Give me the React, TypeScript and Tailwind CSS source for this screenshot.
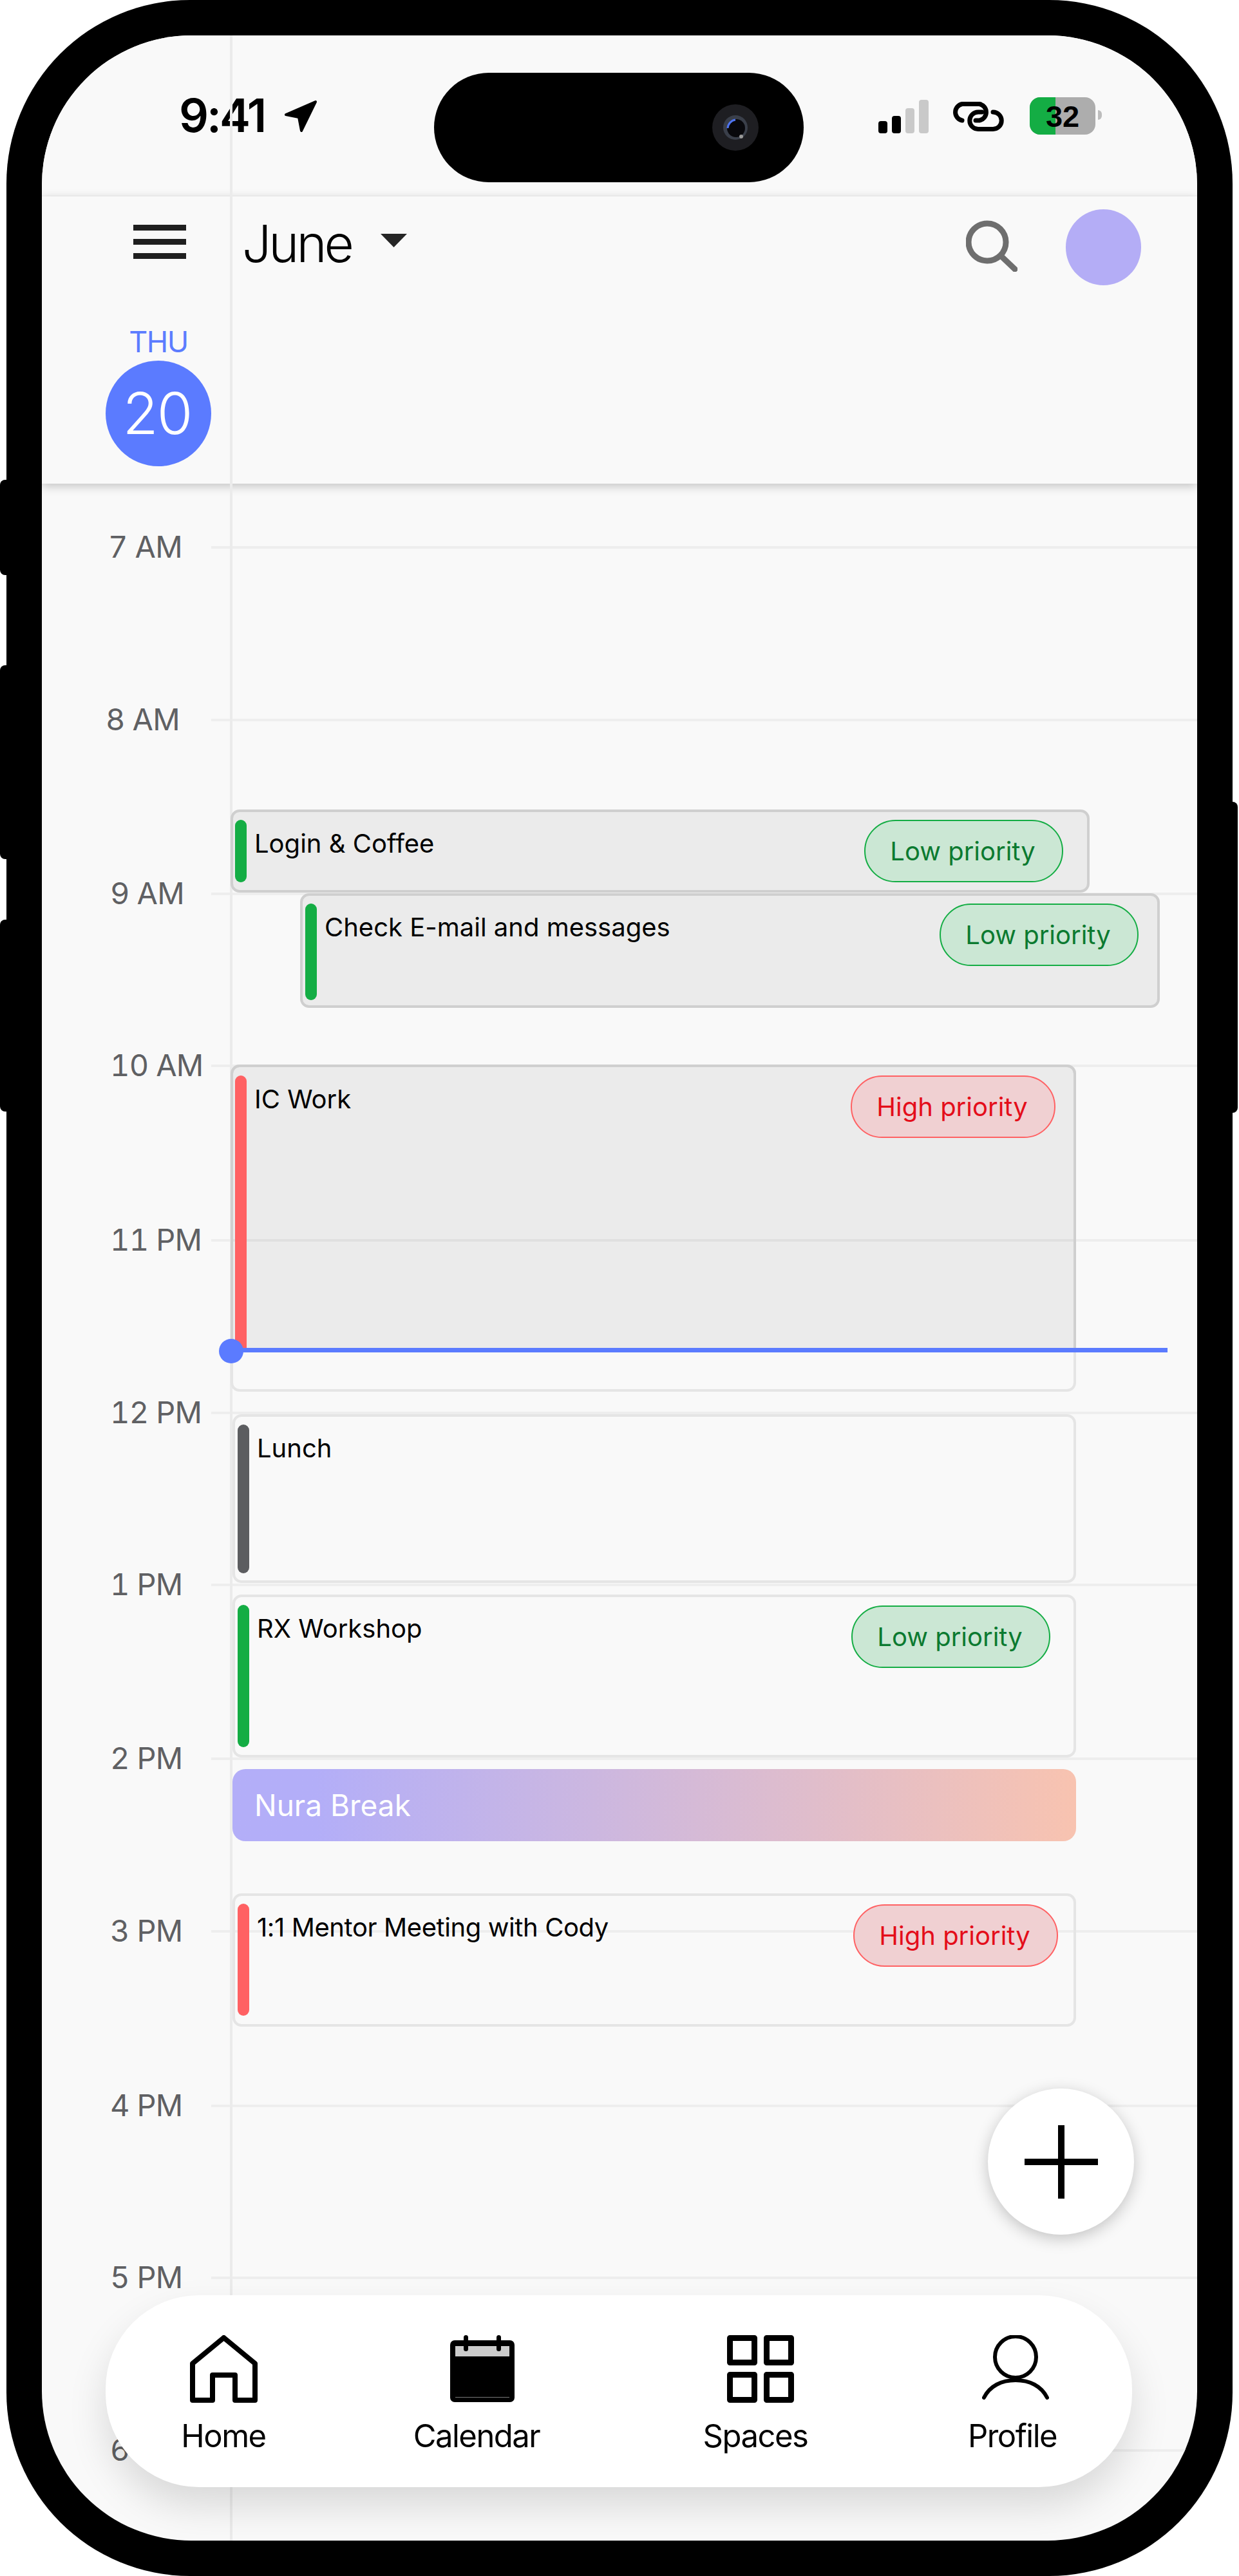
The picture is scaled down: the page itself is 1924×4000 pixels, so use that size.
import type { ReactNode } from "react";

const hours = [
  { label: "7 AM", row: "h-[268px]", text: "ml-[103px]" },
  { label: "8 AM", row: "h-[270px]", text: "ml-[99px]" },
  { label: "9 AM", row: "h-[267px]", text: "ml-[106px]" },
  { label: "10 AM", row: "h-[271px]", text: "ml-[106px]" },
  { label: "11 PM", row: "h-[268px]", text: "ml-[106px]" },
  { label: "12 PM", row: "h-[267px]", text: "ml-[106px]" },
  { label: "1 PM", row: "h-[270px]", text: "ml-[106px]" },
  { label: "2 PM", row: "h-[268px]", text: "ml-[106px]" },
  { label: "3 PM", row: "h-[271px]", text: "ml-[106px]" },
  { label: "4 PM", row: "h-[267px]", text: "ml-[106px]" },
  { label: "5 PM", row: "h-[268px]", text: "ml-[106px]" },
  { label: "6 PM", row: "h-[268px]", text: "ml-[106px]" },
];

function Pill({ kind, className }: { kind: "low" | "high"; className: string }) {
  const tone =
    kind === "low"
      ? "w-[309px] border-[#14ad44] bg-[#cbe7d4] text-[#0b7a30]"
      : "w-[318px] border-[#ff6163] bg-[#f0d0d2] text-[#e40d1a]";
  return (
    <div
      className={`absolute flex h-[97px] items-center justify-center rounded-full border-2 pr-[3px] text-[40px] ${tone} ${className}`}
    >
      {kind === "low" ? "Low priority" : "High priority"}
    </div>
  );
}

function Bar({ color, className }: { color: string; className: string }) {
  return <div className={`w-[18px] shrink-0 rounded-full ${color} ${className}`} />;
}

function Title({ children, className = "" }: { children: ReactNode; className?: string }) {
  return <div className={`mt-[12px] ml-[12px] text-[40px] leading-[50px] text-black ${className}`}>{children}</div>;
}

function NavItem({ icon, label, className, iconClass = "" }: { icon: ReactNode; label: string; className: string; iconClass?: string }) {
  return (
    <div className={`flex w-[200px] flex-col items-center ${className}`}>
      <div className={`flex h-[105px] items-start justify-center ${iconClass}`}>{icon}</div>
      <span className="mt-[27px] text-[49px] leading-[50px] tracking-[-1.5px] text-black">{label}</span>
    </div>
  );
}

function HomeIcon() {
  return (
    <svg width="105" height="105" viewBox="0 0 105 105" fill="none" stroke="#000" strokeWidth="8" strokeLinejoin="round">
      <path d="M35 101H4V44L52.5 4 101 44V101H70V62H35Z" />
    </svg>
  );
}

function CalendarIcon() {
  return (
    <svg width="100" height="105" viewBox="0 0 100 105">
      <rect x="0" y="8" width="100" height="96" rx="7" fill="#000" />
      <rect x="8" y="17" width="84" height="16" fill="#ccc" />
      <rect x="21" y="0" width="7" height="25" rx="3.5" fill="#000" />
      <rect x="72" y="0" width="7" height="25" rx="3.5" fill="#000" />
      <rect x="8" y="96" width="84" height="1" fill="#777" />
    </svg>
  );
}

function SpacesIcon() {
  return (
    <svg width="104" height="105" viewBox="0 0 104 105" fill="none" stroke="#000" strokeWidth="9" strokeLinejoin="round">
      <rect x="4.5" y="4.5" width="38" height="38" />
      <rect x="61.5" y="4.5" width="38" height="38" />
      <rect x="4.5" y="61.5" width="38" height="39" />
      <rect x="61.5" y="61.5" width="38" height="39" />
    </svg>
  );
}

function ProfileIcon() {
  return (
    <svg width="104" height="105" viewBox="0 0 104 105" fill="none" stroke="#000" strokeWidth="6" strokeLinecap="round">
      <circle cx="52" cy="34" r="32" />
      <path d="M3 97C12 79 30 70 52 70S92 79 101 97" />
    </svg>
  );
}

export default function App() {
  return (
    <div className="h-[4000px] w-[1924px] bg-white pl-[10px] font-[Inter,sans-serif]">
      {/* phone body */}
      <div className="relative h-full w-[1904px] rounded-[285px] bg-black p-[55px]">
        <div className="absolute -left-[10px] top-[745px] h-[148px] w-[10px] rounded-l-[8px] bg-black" />
        <div className="absolute -left-[10px] top-[1033px] h-[301px] w-[10px] rounded-l-[8px] bg-black" />
        <div className="absolute -left-[10px] top-[1428px] h-[298px] w-[10px] rounded-l-[8px] bg-black" />
        <div className="absolute -right-[8px] top-[1245px] h-[483px] w-[8px] rounded-r-[8px] bg-black" />

        <div className="relative flex h-full flex-col overflow-hidden rounded-[232px] bg-[#f9f9f9]">
          {/* vertical day line */}
          <div className="absolute bottom-0 left-[292px] top-0 z-[15] w-[4px] bg-[#ebebeb]" />

          {/* status bar */}
          <div className="relative z-10 flex h-[250px] shrink-0 items-start border-b-2 border-[#f6f6f6] bg-[#f9f9f9]">
            <div className="ml-[213px] mt-[88px] text-[72px] font-semibold leading-[72px] tracking-[-3px] text-black">9:41</div>
            <svg className="ml-[30px] mt-[100px]" width="52" height="50" viewBox="0 0 52 50" fill="#000" stroke="#000" strokeWidth="4" strokeLinejoin="round">
              <path d="M3 23L49 3 27 48 23 27Z" />
            </svg>
            <div className="ml-[181px] mt-[58px] flex h-[170px] w-[574px] items-center justify-end rounded-full bg-black pr-[70px]">
              <svg width="72" height="72" viewBox="0 0 72 72">
                <circle cx="36" cy="36" r="36" fill="#1e1e22" />
                <circle cx="36" cy="36" r="19" fill="#3a3f4a" />
                <circle cx="37" cy="37" r="14" fill="#08080c" />
                <path d="M24 37A14 14 0 0 1 36 24" fill="none" stroke="#4f74f0" strokeWidth="3" />
                <circle cx="45" cy="50" r="3" fill="#999" />
              </svg>
            </div>
            <div className="ml-[116px] mt-[100px] flex items-end gap-[7px]">
              <div className="h-[19px] w-[14px] rounded-[4px] bg-black" />
              <div className="h-[27px] w-[14px] rounded-[4px] bg-black" />
              <div className="h-[39px] w-[14px] rounded-[4px] bg-[#c9c9c9]" />
              <div className="h-[52px] w-[15px] rounded-[4px] bg-[#c9c9c9]" />
            </div>
            <svg className="ml-[37px] mt-[103px]" width="80" height="46" viewBox="0 0 80 46" fill="none" stroke="#000" strokeWidth="7" strokeLinecap="round">
              <path d="M15 29A13 13 0 0 1 15 3.5H42A13 13 0 0 1 42 29H36" />
              <path d="M63 16A13 13 0 0 1 63 42.5H40A13 13 0 0 1 40 16H46" />
            </svg>
            <div className="relative ml-[40px] mt-[96px] flex h-[58px] w-[102px] items-center justify-center overflow-hidden rounded-[16px] bg-[#adadad]">
              <div className="absolute inset-y-0 left-0 w-[40px] bg-[#14ad44]" />
              <span className="relative font-['Liberation_Sans',sans-serif] text-[47px] font-bold leading-none text-black">32</span>
            </div>
            <div className="ml-[4px] mt-[116px] h-[15px] w-[6px] rounded-r-full bg-[#bdbdbd]" />
          </div>

          {/* calendar header */}
          <div className="relative z-10 flex h-[446px] shrink-0 flex-col bg-[#f9f9f9] shadow-[0_4px_14px_rgba(0,0,0,0.22)]">
            <div className="flex items-start">
              <div className="ml-[142px] mt-[44px] flex w-[82px] flex-col gap-[13px]">
                <div className="h-[9px] bg-[#1f1f1f]" />
                <div className="h-[9px] bg-[#1f1f1f]" />
                <div className="h-[9px] bg-[#1f1f1f]" />
              </div>
              <div className="ml-[87px] mt-[25px] text-[80px] font-[350] leading-[96px] tracking-[-4px] text-black">June</div>
              <svg className="ml-[45px] mt-[58px]" width="41" height="21" viewBox="0 0 41 21" fill="#262626">
                <path d="M0 0H41L20.5 21Z" />
              </svg>
              <svg className="ml-auto mt-[37px]" width="80" height="80" viewBox="0 0 80 80" fill="none" stroke="#6e6e6e" strokeWidth="9" strokeLinecap="round">
                <circle cx="33" cy="34" r="29" />
                <path d="M55 56L76 76" />
              </svg>
              <div className="ml-[75px] mr-[87px] mt-[20px] h-[118px] w-[117px] rounded-full bg-[#b4adf6]" />
            </div>
            <div className="absolute left-[99px] top-[201px] flex w-[164px] flex-col items-center">
              <span className="text-[45px] leading-[50px] tracking-[-1.5px] text-[#5c7cff]">THU</span>
              <div className="mt-[4px] flex h-[164px] w-[164px] items-center justify-center rounded-full bg-[#5b7bff] pr-[4px] text-[90px] font-light leading-none tracking-[-2px] text-white">
                20
              </div>
            </div>
          </div>

          {/* time grid */}
          <div className="relative flex-1">
            <div className="flex flex-col pt-[69px]">
              {hours.map((h) => (
                <div key={h.label} className={`shrink-0 ${h.row}`}>
                  <div className="flex h-[60px] items-center">
                    <span className={`w-[0px] whitespace-nowrap text-[47px] leading-[50px] tracking-[-0.8px] tabular-nums text-[#5f6063] -translate-y-[1px] ${h.text}`}>{h.label}</span>
                    <div className="ml-auto h-[4px] w-[1531px] bg-[#eeeeee]" />
                  </div>
                </div>
              ))}
            </div>

            {/* Login & Coffee */}
            <div className="absolute left-[293px] top-[506px] z-20 flex h-[129px] w-[1334px] rounded-[14px] border-4 border-[#cfcfcf] bg-[#ebebeb] p-[12px] pl-[3px]">
              <Bar color="bg-[#14ad44]" className="h-[97px]" />
              <Title>Login &amp; Coffee</Title>
              <Pill kind="low" className="right-[37px] top-[12px]" />
            </div>

            {/* Check E-mail */}
            <div className="absolute left-[401px] top-[636px] z-20 flex h-[178px] w-[1335px] rounded-[14px] border-4 border-[#cfcfcf] bg-[#ebebeb] p-[12px] pl-[4px]">
              <Bar color="bg-[#14ad44]" className="h-[150px]" />
              <Title>Check E-mail and messages</Title>
              <Pill kind="low" className="right-[29px] top-[12px]" />
            </div>

            {/* IC Work, shaded up to the current time */}
            <div className="absolute left-[293px] top-[902px] z-20 h-[508px] w-[1313px] rounded-[14px] border-4 border-[#e5e5e5]">
              <div className="absolute -left-[4px] -right-[4px] -top-[4px] flex h-[443px] rounded-t-[14px] border-4 border-b-0 border-[#cfcfcf] bg-black/[0.056] pl-[3px] pt-[13px]">
                <div className="h-[426px] w-[18px] rounded-t-full bg-[#ff6163]" />
                <Title>IC Work</Title>
                <Pill kind="high" className="right-[28px] top-[13px]" />
              </div>
            </div>

            {/* Lunch */}
            <div className="absolute left-[296px] top-[1445px] z-20 flex h-[262px] w-[1310px] rounded-[14px] border-4 border-[#e5e5e5] p-[12px] pl-[4px]">
              <Bar color="bg-[#5c5d60]" className="h-[231px]" />
              <Title>Lunch</Title>
            </div>

            {/* RX Workshop */}
            <div className="absolute left-[296px] top-[1725px] z-20 flex h-[253px] w-[1310px] rounded-[14px] border-4 border-[#e5e5e5] p-[12px] pl-[4px]">
              <Bar color="bg-[#14ad44]" className="h-[221px]" />
              <Title>RX Workshop</Title>
              <Pill kind="low" className="right-[36px] top-[13px]" />
            </div>

            {/* Nura Break */}
            <div className="absolute left-[296px] top-[1996px] z-20 flex h-[112px] w-[1310px] items-center rounded-[20px] bg-gradient-to-r from-[#b3aef8] from-10% to-[#f8c3b0] pl-[34px] text-[46px] text-white">
              Nura Break
            </div>

            {/* 1:1 Mentor */}
            <div className="absolute left-[296px] top-[2189px] z-20 flex h-[207px] w-[1310px] rounded-[14px] border-4 border-[#e5e5e5] p-[12px] pl-[4px]">
              <Bar color="bg-[#ff6163]" className="h-[174px]" />
              <Title className="tracking-[-0.4px]">1:1 Mentor Meeting with Cody</Title>
              <Pill kind="high" className="right-[24px] top-[13px]" />
            </div>

            {/* now line */}
            <div className="absolute left-[294px] top-[1342px] z-20 h-[7px] w-[1454px] bg-[#5b7bff]" />
            <div className="absolute left-[275px] top-[1328px] z-20 h-[38px] w-[38px] rounded-full bg-[#5b7bff]" />
          </div>

          {/* add button */}
          <div className="absolute left-[1469px] top-[3188px] z-30 flex h-[227px] w-[227px] items-center justify-center rounded-full bg-white shadow-[0_6px_24px_rgba(0,0,0,0.22)]">
            <svg width="114" height="114" viewBox="0 0 114 114" fill="#000">
              <rect x="0" y="52" width="114" height="10" />
              <rect x="52" y="0" width="10" height="114" />
            </svg>
          </div>

          {/* bottom nav */}
          <div className="absolute left-[99px] top-[3509px] z-30 flex h-[298px] w-[1594px] items-start rounded-[145px] bg-white pt-[62px] shadow-[0_30px_60px_rgba(0,0,0,0.13)]">
            <NavItem icon={<HomeIcon />} label="Home" className="ml-[83px]" />
            <NavItem icon={<CalendarIcon />} label="Calendar" className="ml-[193px]" iconClass="translate-x-[9px]" />
            <NavItem icon={<SpacesIcon />} label="Spaces" className="ml-[233px]" iconClass="translate-x-[8px]" />
            <NavItem icon={<ProfileIcon />} label="Profile" className="ml-[199px]" iconClass="translate-x-[5px]" />
          </div>
        </div>
      </div>
    </div>
  );
}
